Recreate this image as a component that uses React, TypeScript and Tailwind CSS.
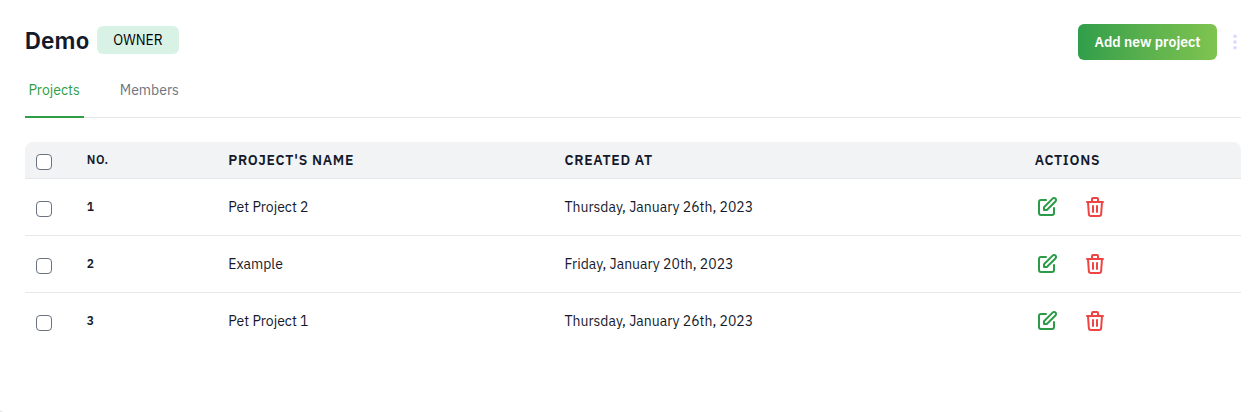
const projects = [
  { id: 1, name: "Pet Project 2", createdAt: "Thursday, January 26th, 2023" },
  { id: 2, name: "Example", createdAt: "Friday, January 20th, 2023" },
  { id: 3, name: "Pet Project 1", createdAt: "Thursday, January 26th, 2023" },
];

const columns = "grid grid-cols-[61.8px_141.5px_336.2px_470.2px_1fr] items-center";

function Checkbox() {
  return (
    <input
      type="checkbox"
      className="mt-1 ml-[11px] block size-4 appearance-none rounded border border-[#6b7280] bg-white checked:bg-[#2f9e44]"
    />
  );
}

function EditIcon() {
  return (
    <svg className="size-6 text-[#2b9b47]" viewBox="0 0 24 24" fill="none" stroke="currentColor" strokeWidth="2" strokeLinecap="round" strokeLinejoin="round">
      <path d="M11 5H6a2 2 0 00-2 2v11a2 2 0 002 2h11a2 2 0 002-2v-5m-1.414-9.414a2 2 0 112.828 2.828L11.828 15H9v-2.828l8.586-8.586z" />
    </svg>
  );
}

function TrashIcon() {
  return (
    <svg className="size-6 text-[#ef4444]" viewBox="0 0 24 24" fill="none" stroke="currentColor" strokeWidth="2" strokeLinecap="round" strokeLinejoin="round">
      <path d="M19 7l-.867 12.142A2 2 0 0116.138 21H7.862a2 2 0 01-1.995-1.858L5 7m5 4v6m4-6v6m1-10V4a1 1 0 00-1-1h-4a1 1 0 00-1 1v3M4 7h16" />
    </svg>
  );
}

export default function App() {
  return (
    <main className="relative h-[412px] overflow-hidden bg-white pt-6 pr-3 pl-[25px] font-['IBM_Plex_Sans','Roboto',sans-serif] text-sm text-[#141a2b] antialiased">
      <header className="flex h-9 items-start justify-between">
        <div className="flex items-start">
          <h1 className="-ml-[0.6px] w-[72.6px] text-2xl leading-8 font-semibold">Demo</h1>
          <span className="mt-0.5 flex h-7 w-[82px] items-center justify-center rounded-md bg-[#d9f2e6] text-black">
            OWNER
          </span>
        </div>
        <div className="-mr-1.5 flex items-center">
          <button className="h-9 w-[139px] rounded-md bg-linear-to-r from-[#2f9e4a] to-[#7fc450] font-semibold text-white">
            Add new project
          </button>
          <button aria-label="More options" className="ml-1.5 flex size-6 items-center justify-center">
            <svg className="h-4 w-1 text-violet-200" viewBox="0 0 4 16" fill="currentColor">
              <circle cx="2" cy="2.2" r="1.75" />
              <circle cx="2" cy="8" r="1.75" />
              <circle cx="2" cy="13.8" r="1.75" />
            </svg>
          </button>
        </div>
      </header>

      <nav className="mt-3 flex h-[46px] border-b border-gray-200">
        <a className="h-[46px] w-[59px] border-b-2 border-[#2f9e44] pl-[3.5px] leading-[37px] text-[#2f9e44]">Projects</a>
        <a className="ml-[35.8px] leading-[37px] text-[#6b7280]">Members</a>
      </nav>

      <section className="mt-6">
        <div className={`${columns} h-[37px] rounded-t-lg border-b border-gray-200 bg-[#f2f3f5] font-semibold uppercase`}>
          <Checkbox />
          <span className="text-xs tracking-[0.5px]">No.</span>
          <span className="tracking-[0.7px]">Project's name</span>
          <span className="tracking-[0.7px]">Created at</span>
          <span className="tracking-[0.7px]">Actions</span>
        </div>
        {projects.map((project) => (
          <div key={project.id} className={`${columns} h-[57px] border-b border-gray-200 last:border-transparent`}>
            <Checkbox />
            <span className="text-xs font-semibold">{project.id}</span>
            <span>{project.name}</span>
            <span>{project.createdAt}</span>
            <span className="flex gap-6">
              <EditIcon />
              <TrashIcon />
            </span>
          </div>
        ))}
      </section>
      <div className="absolute -bottom-1 -left-1 h-1.5 w-[7px] rounded-tr-sm bg-gray-200" />
    </main>
  );
}
